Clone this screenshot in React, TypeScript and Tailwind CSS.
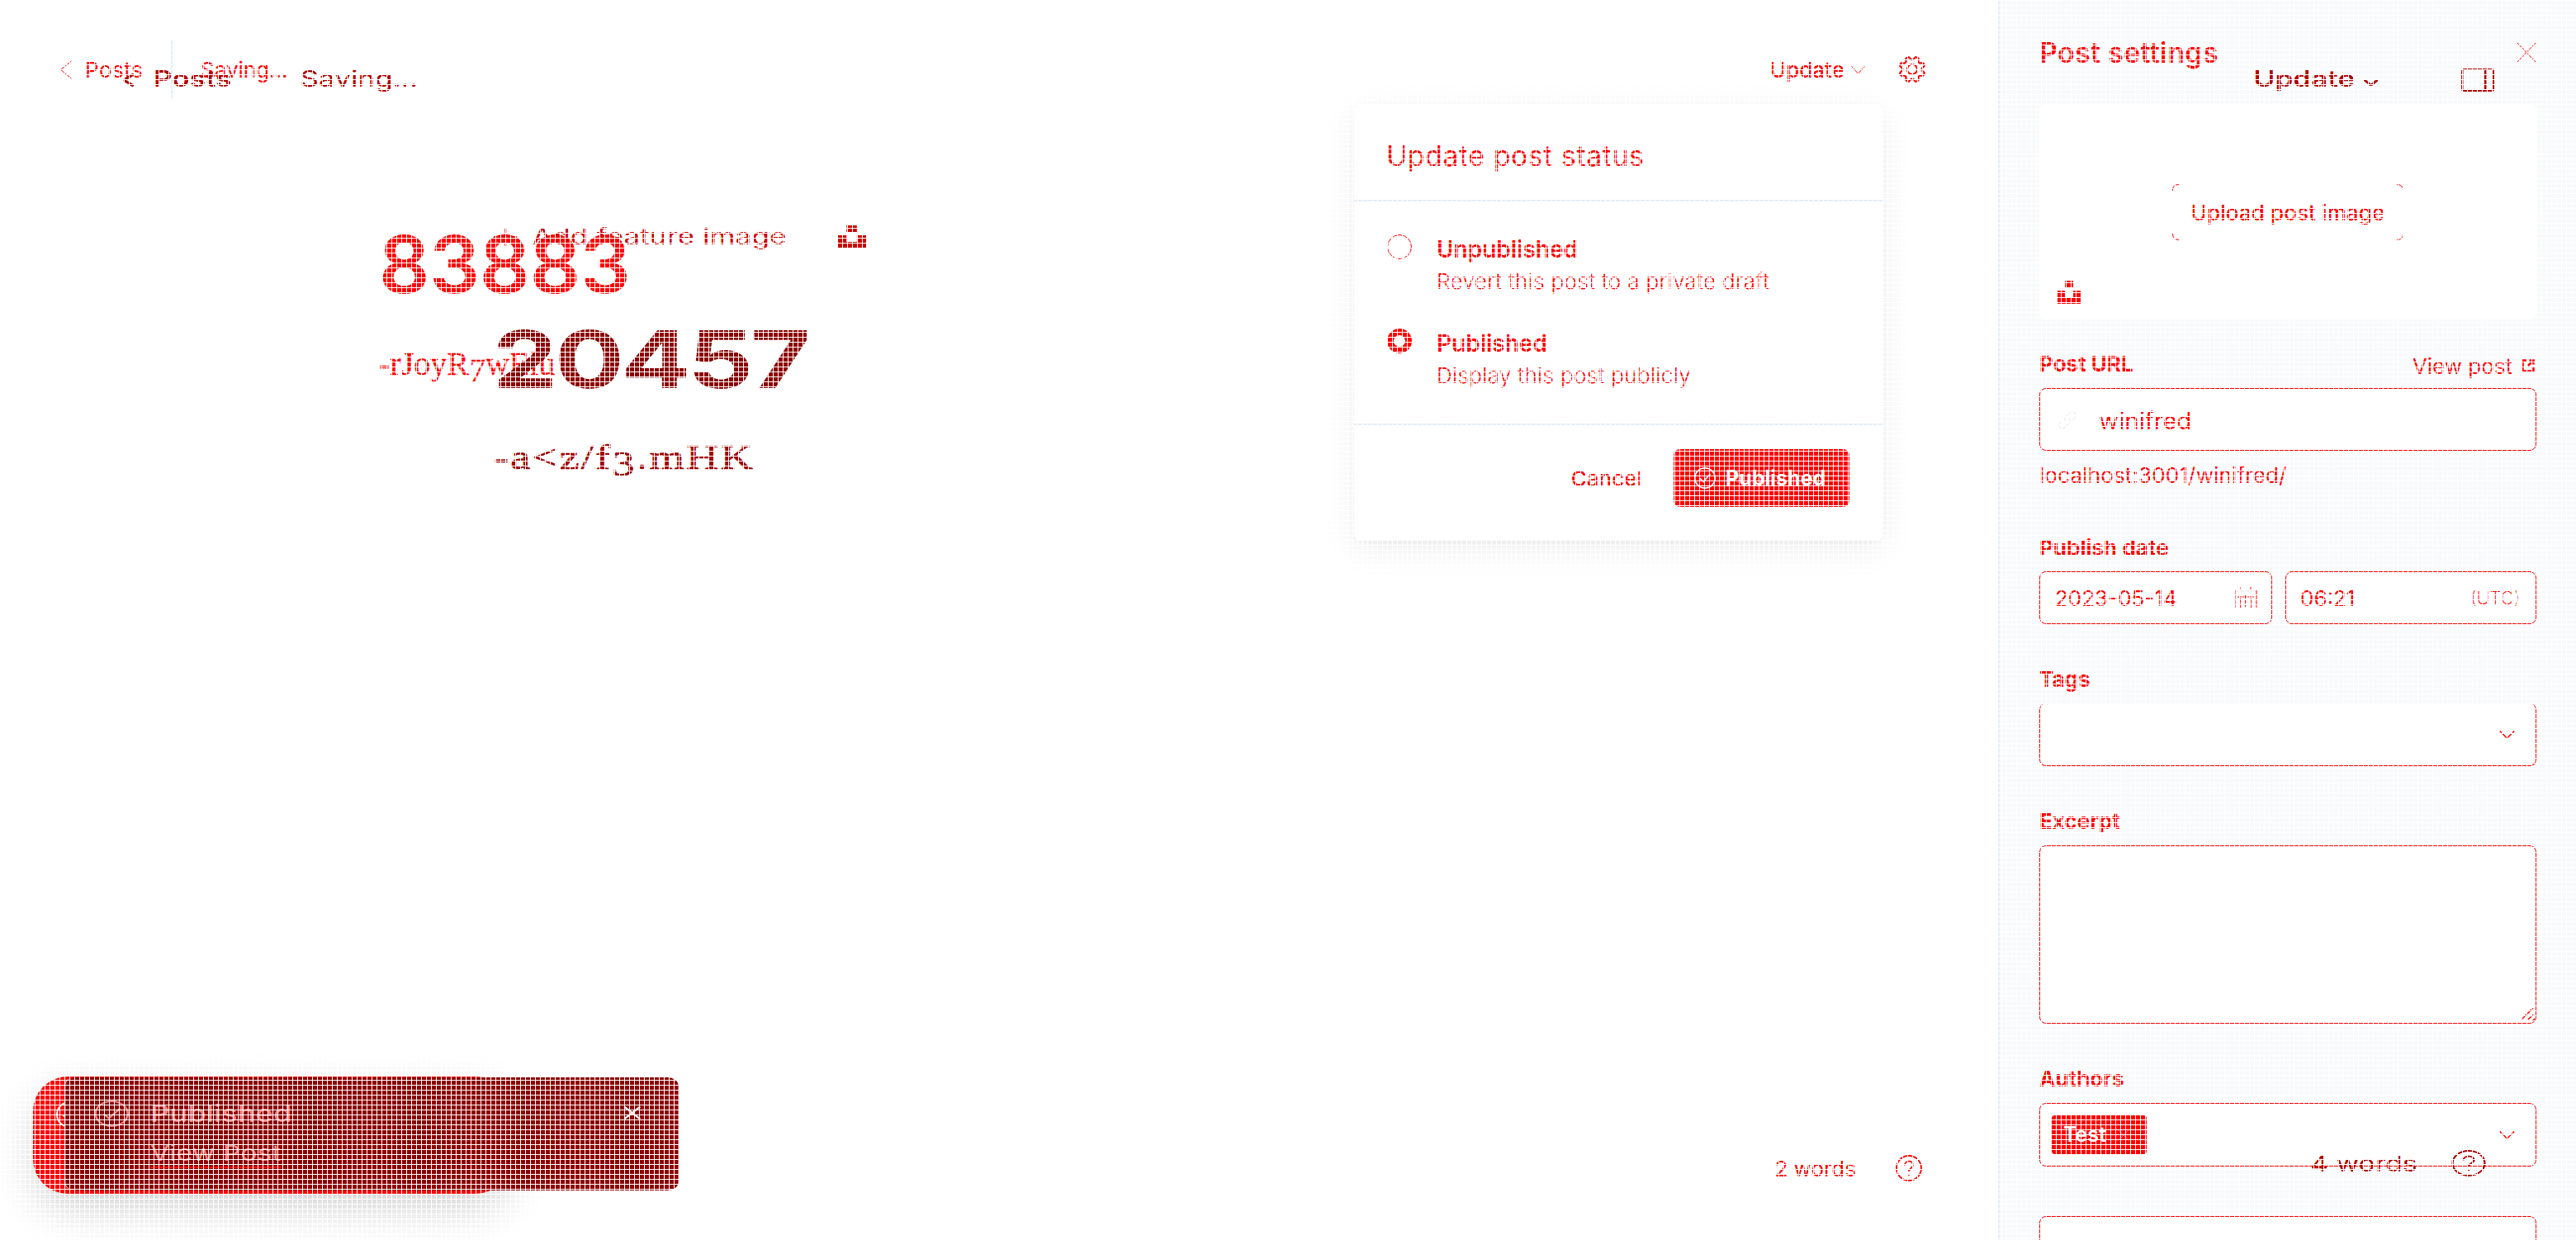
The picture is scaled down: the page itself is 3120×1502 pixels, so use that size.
import React from 'react';

type IconProps = { className?: string };

function Unsplash({ className }: IconProps) {
  return (
    <svg className={className} viewBox="0 0 28 28" preserveAspectRatio="none" fill="currentColor">
      <path d="M9 0h10v8H9zM0 12h9v8h10v-8h9v16H0z" />
    </svg>
  );
}

function Chevron({ className, points, width = 1.5 }: IconProps & { points: string; width?: number }) {
  return (
    <svg className={className} viewBox="0 0 24 24" preserveAspectRatio="none" fill="none" stroke="currentColor" strokeWidth={width}>
      <polyline points={points} vectorEffect="non-scaling-stroke" />
    </svg>
  );
}

const DOWN = '1,1 12,22 23,1';
const LEFT = '23,1 1,12 23,23';

function Cross({ className, width = 1.5 }: IconProps & { width?: number }) {
  return (
    <svg className={className} viewBox="0 0 24 24" preserveAspectRatio="none" fill="none" stroke="currentColor" strokeWidth={width}>
      <path d="M1 1l22 22M23 1L1 23" vectorEffect="non-scaling-stroke" />
    </svg>
  );
}

function CircleCheck({ className }: IconProps) {
  return (
    <svg className={className} viewBox="0 0 32 32" fill="none" stroke="currentColor" strokeWidth="2">
      <circle cx="16" cy="16" r="15" />
      <path d="M8.500 16.500l5 5 10.500-12" />
    </svg>
  );
}

function Help({ className }: IconProps) {
  return (
    <svg className={className} viewBox="0 0 32 32" fill="none" stroke="currentColor" strokeWidth="1.800">
      <circle cx="16" cy="16" r="15" />
      <path d="M11 12.500c0-6.500 10-6.500 10-.5 0 4-5 4-5 8M16 23v2" />
    </svg>
  );
}

function Gear({ className }: IconProps) {
  const lobes: string[] = [];
  const steps = 96;
  for (let i = 0; i < steps; i++) {
    const a = (i / steps) * Math.PI * 2;
    const r = 13.6 + 2 * Math.tanh(2 * Math.cos(8 * a + Math.PI));
    lobes.push(`${(17 + r * Math.cos(a)).toFixed(2)},${(17 + r * Math.sin(a)).toFixed(2)}`);
  }
  return (
    <svg className={className} viewBox="0 0 34 34" fill="none" stroke="currentColor" strokeWidth="2.200">
      <polygon points={lobes.join(' ')} />
      <circle cx="17" cy="17" r="6" />
    </svg>
  );
}

// Old-style figure that hangs below the baseline.
function LowFigure({ children }: { children: string }) {
  return <span className="inline-block translate-y-2">{children}</span>;
}

function Label({ children, className = '' }: { children: React.ReactNode; className?: string }) {
  return <div className={`h-10 text-[26px] leading-10 font-bold ${className}`}>{children}</div>;
}

function Sidebar() {
  return (
    <aside className="h-full w-[700px] shrink-0 border-l-2 border-[#e6eef5] bg-[#f9fafc] pr-12 pl-12">
      <div className="flex h-[126px] items-center justify-between">
        <h2 className="text-[34px] font-semibold tracking-[0.3px]">Post settings</h2>
        <Cross className="h-[25px] w-6" width={1} />
      </div>
      <div className="relative flex h-[261px] items-center justify-center rounded-lg bg-white">
        <div className="relative flex h-[68px] w-[280px] items-center justify-center pt-0.5 text-[26px] font-medium tracking-[0.1px]">
          Upload post image
          <svg className="absolute inset-0 h-full w-full" viewBox="0 0 280 68" fill="none" stroke="currentColor">
            <path d="M.5 8V7Q.5.5 8 .5M272 .5Q279.500.5 279.500 8M.5 60Q.5 67.500 8 67.500M272 67.500Q279.500 67.500 279.500 60" />
          </svg>
        </div>
        <Unsplash className="absolute bottom-[19px] left-[22px] h-7 w-7" />
      </div>
      <div className="mt-[29px] mb-1 flex h-[50px] items-center justify-between">
        <Label>Post URL</Label>
        <div className="flex items-center gap-[11px] pt-1 pr-0.5 text-[26px]">
          View post
          <svg className="h-4 w-4" viewBox="0 0 16 16" fill="none" stroke="currentColor" strokeWidth="2.500">
            <path d="M6 1.500H1.500v13h13V10M9.500 1.500h5v5M14.500 1.500L8 8" />
          </svg>
        </div>
      </div>
      <div className="flex h-[76px] items-center rounded-lg border border-[#ff0000] bg-white pt-0.5 pl-[21px] text-[29.5px]">
        <svg className="mr-[26px] h-6 w-6 text-[#dfe6ec]" viewBox="0 0 24 24" fill="none" stroke="currentColor">
          <path d="M10 14a4 4 0 0 1 0-6l5-5a4 4 0 0 1 6 6l-3 3M14 10a4 4 0 0 1 0 6l-5 5a4 4 0 0 1-6-6l3-3" strokeDasharray="5 1" />
        </svg>
        winifred
      </div>
      <p className="mt-[10px] h-[39px] text-[26px] leading-10 tracking-[0.15px]">localhost:3001/winifred/</p>
      <Label className="mt-[49px]">Publish date</Label>
      <div className="mt-2 flex gap-4 text-[26px]">
        <div className="flex h-16 w-[282px] items-center justify-between rounded-lg border border-[#ff0000] bg-white pr-[17px] pl-[18px]">
          2023-05-14
          <svg className="h-[26px] w-7" viewBox="0 0 28 26" fill="none" stroke="currentColor">
            <path d="M1 5h26M1 19h26" stroke="#e5e5e5" />
            <path d="M1 4v21M27 4v21M4 12h21M13.500 9v15M7.500 14v11M20.500 14v11M7 0v3M20 0v3" strokeDasharray="5 1" />
          </svg>
        </div>
        <div className="flex h-16 w-[304px] items-center justify-between rounded-lg border border-[#ff0000] bg-white pr-[19px] pl-[17px]">
          06:21
          <span className="text-[22px] font-extralight">(UTC)</span>
        </div>
      </div>
      <Label className="mt-[47px]">Tags</Label>
      <div className="mt-[9px] flex h-[76px] items-center justify-end rounded-lg border border-t-0 border-[#ff0000] bg-white pr-[25px]">
        <Chevron className="h-2.5 w-[19px]" points={DOWN} />
      </div>
      <Label className="mt-[47px]">Excerpt</Label>
      <div className="mt-[9px] flex h-[216px] items-end justify-end rounded-lg border border-[#ff0000] bg-white">
        <svg className="h-[18px] w-[18px]" viewBox="0 0 18 18" stroke="currentColor" strokeWidth="1.500">
          <path d="M1 14L15 0M9 14l6-6M14 16l3-3" />
        </svg>
      </div>
      <Label className="mt-[47px]">Authors</Label>
      <div className="mt-[9px] flex h-[77px] items-center justify-between rounded-lg border border-[#ff0000] bg-white pr-[25px] pl-3.5">
        <div className="flex h-[47px] w-[115px] items-center gap-3.5 rounded-sm bg-[#ff0000] pl-3.5 text-[25px] font-semibold text-white">
          Test
          <Cross className="h-3.5 w-3.5 text-[#ff6a6a]" width={1} />
        </div>
        <Chevron className="h-2.5 w-[19px]" points={DOWN} />
      </div>
      <div className="mt-[60px] h-20 rounded-lg border border-[#ff0000] bg-white" />
    </aside>
  );
}

function StatusOption({ title, hint, checked }: { title: string; hint: string; checked?: boolean }) {
  return (
    <div className="flex h-[114px]">
      <div className="w-[60px] pt-[13px]">
        {checked ? (
          <div className="h-[30px] w-[30px] rounded-full border-[8px] border-[#ff0000]" />
        ) : (
          <div className="h-[30px] w-[30px] rounded-full border border-[#ff0000]" />
        )}
      </div>
      <div>
        <div className="h-[60px] text-[28px] leading-[62px] font-semibold">{title}</div>
        <div className="-mt-2.5 h-10 text-[26px] leading-10 font-light tracking-[0.35px]">{hint}</div>
      </div>
    </div>
  );
}

function StatusMenu() {
  return (
    <div className="absolute top-[127px] left-[1640px] h-[528px] w-[640px] rounded-lg bg-white shadow-[0_10px_40px_rgba(0,0,0,0.08),0_2px_4px_rgba(0,0,0,0.03)]">
      <div className="flex h-[117px] items-center border-b-2 border-[#e6eef5] pt-2 pl-[39px] text-[34px] tracking-[0.5px]">Update post status</div>
      <div className="h-[271px] border-b-2 border-[#e6eef5] pt-[27px] pl-10">
        <StatusOption title="Unpublished" hint="Revert this post to a private draft" />
        <StatusOption title="Published" hint="Display this post publicly" checked />
      </div>
      <div className="flex items-center justify-end gap-[38px] pt-[29px] pr-10 text-[26px]">
        <span className="font-medium">Cancel</span>
        <div className="flex h-[70px] w-[213px] items-center gap-3 rounded-lg bg-[#ff0000] pl-[25px] font-bold text-white">
          <CircleCheck className="h-[26px] w-[26px]" />
          <span className="pt-0.5 text-[25px]">Published</span>
        </div>
      </div>
    </div>
  );
}

function BaseLayer() {
  return (
    <div className="flex h-full text-[#ff0000]">
      <main className="relative flex h-full w-[2420px] shrink-0 flex-col bg-white">
        <header className="flex h-[168px] items-center pr-[87px] pl-[73px] text-[26px]">
          <Chevron className="h-[23px] w-3.5" points={LEFT} width={1} />
          <span className="ml-4 w-[104px] tracking-[0.5px]">Posts</span>
          <div className="h-[70px] w-0.5 bg-[#e6eef5]" />
          <span className="ml-[34px]">Saving...</span>
          <div className="ml-auto flex items-center">
            <span className="font-medium">Update</span>
            <Chevron className="mt-0.5 ml-2 h-2.5 w-[17px]" points={DOWN} width={1} />
            <Gear className="ml-10 h-[34px] w-[34px]" />
          </div>
        </header>
        <div className="grow pt-[92px] pl-[459px]">
          <h1 className="h-[120px] text-[96px] leading-[120px] font-semibold tracking-[-0.4px]">83883</h1>
          <p className="mt-[31px] h-[60px] font-['Liberation_Serif',serif] text-[40px] leading-[60px] [-webkit-text-stroke:0.4px_#ff0000]">
            -rJoyR<LowFigure>7</LowFigure>wElu
          </p>
        </div>
        <footer className="flex h-[174px] items-center justify-end gap-12 pr-[92px] text-[26px]">
          2 words
          <Help className="h-8 w-8" />
        </footer>
        <StatusMenu />
        <div className="absolute bottom-14 left-10 h-[142px] w-[578px] rounded-[42px] bg-[#ff0000] pt-[30px] pl-7 text-white shadow-[0_20px_50px_rgba(0,0,0,0.18)]">
          <CircleCheck className="h-8 w-8" />
        </div>
      </main>
      <Sidebar />
    </div>
  );
}

function StretchedLayer() {
  return (
    <div className="absolute inset-y-0 left-0 flex w-[2400px] origin-left scale-x-[1.3] flex-col text-[#b00000]">
      <header className="flex h-[193px] items-center pr-[76px] pl-[115px] text-[26px]">
        <Chevron className="h-4 w-2.5" points={LEFT} width={3} />
        <span className="ml-[18px] text-[27px] font-semibold">Posts</span>
        <span className="ml-[64px] text-[27px]">Saving...</span>
        <div className="ml-auto flex items-center">
          <span className="text-[27px] font-semibold">Update</span>
          <Chevron className="mt-1.5 ml-2 h-2 w-3.5" points={DOWN} width={2.5} />
          <svg className="ml-[77px] h-7 w-[31px]" viewBox="0 0 31 28" fill="none" stroke="currentColor" strokeWidth="2">
            <rect x="1" y="1" width="29" height="26" rx="2" />
            <path d="M22.500 1v26" />
          </svg>
        </div>
      </header>
      <div className="grow pt-[64px] pl-[460px]">
        <div className="flex h-[60px] items-center text-[27px] text-[#d00000]">
          <svg className="h-[22px] w-[22px]" viewBox="0 0 22 22" stroke="currentColor" strokeWidth="1.500">
            <path d="M11 0v22M0 11h22" />
          </svg>
          <span className="ml-[14px] w-[284px]">
            <span className="tracking-[0.1px]">Add feature image</span>
          </span>
          <Unsplash className="h-7 w-[27px]" />
        </div>
        <h1 className="mt-[58px] -ml-px h-[120px] text-[96px] leading-[120px] font-bold tracking-[-2.8px] text-[#8b0000]">20457</h1>
        <p className="mt-[29px] h-[60px] font-['Liberation_Serif',serif] text-[42px] leading-[60px] tracking-[1.6px] text-[#a00000] [-webkit-text-stroke:0.6px_#a00000]">
          -a&lt;z/f<LowFigure>3</LowFigure>.mHK
        </p>
      </div>
      <footer className="flex h-[186px] items-center justify-end gap-8 pr-[84px] text-[26px]">
        4 words
        <Help className="h-8 w-8" />
      </footer>
      <div className="absolute bottom-[60px] left-[60px] flex h-[137px] w-[572px] rounded-[10px] border-l border-[#e5cccc] bg-[#8b0000] text-[26px] text-[#f58080]">
        <CircleCheck className="mt-7 ml-[27px] h-8 w-8" />
        <div className="ml-5">
          <div className="mt-6 h-10 text-[28px] leading-10 font-medium">Published</div>
          <div className="mt-2 h-10 leading-10 underline decoration-[#ff0000] decoration-2 underline-offset-[7px]">View Post</div>
        </div>
        <Cross className="mt-[35px] mr-[35px] ml-auto h-4 w-4 text-white" width={2} />
      </div>
    </div>
  );
}

export default function App() {
  return (
    <div className="relative h-[1502px] w-[3120px] overflow-hidden bg-white font-['Inter',sans-serif]">
      <BaseLayer />
      <StretchedLayer />
      <div className="pointer-events-none absolute inset-0 bg-[linear-gradient(#fff_1px,transparent_1px),linear-gradient(90deg,#fff_1px,transparent_1px)] bg-[length:6px_6px]" />
    </div>
  );
}
